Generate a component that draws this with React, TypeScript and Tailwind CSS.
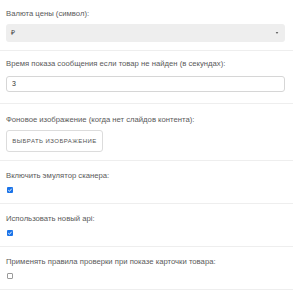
import React from 'react';

const Check = ({ on }: { on: boolean }) =>
  on ? (
    <span className="flex h-[6px] w-[6px] items-center justify-center rounded-[1px] bg-[#1a73e8]">
      <svg viewBox="0 0 6 6" className="h-[6px] w-[6px]">
        <path d="M1.3 3.2 L2.5 4.3 L4.7 1.7" fill="none" stroke="#fff" strokeWidth="0.9" />
      </svg>
    </span>
  ) : (
    <span className="block h-[6px] w-[6px] rounded-[1px] border border-[#9a9a9a] bg-white" />
  );

const Row = ({
  label,
  pad = 'pt-[9px] pb-[10px]',
  gap = 'mb-[6px]',
  children,
}: {
  label: string;
  pad?: string;
  gap?: string;
  children: React.ReactNode;
}) => (
  <div className={`border-b border-[#eeeeee] pl-[6px] pr-[8px] ${pad}`}>
    <div className={`leading-[11px] ${gap}`}>{label}</div>
    {children}
  </div>
);

export default function App() {
  return (
    <div className="h-[292px] w-[300px] bg-white text-[7.7px] text-[#5a5a5a] [font-family:'Liberation_Sans',Arial,sans-serif]">
      <div className="w-[293px]">
        <Row label="Валюта цены (символ):" pad="pt-[8px] pb-[8px]" gap="mb-[5px]">
          <div className="flex h-[18px] items-center justify-between rounded-[3px] bg-[#eeeeee] pl-[5px] pr-[6px] text-[7px] text-[#444]">
            <span>₽</span>
            <svg viewBox="0 0 4 3" className="h-[2px] w-[4px]">
              <path d="M0 0 L4 0 L2 3 Z" fill="#666" />
            </svg>
          </div>
        </Row>
        <Row
          label="Время показа сообщения если товар не найден (в секундах):"
          pad="pt-[7px] pb-[11px]"
          gap="mb-[7px]"
        >
          <div className="flex h-[16px] items-center rounded-[3px] border border-[#d6d6d6] pl-[5px] text-[7px] text-[#333]">
            3
          </div>
        </Row>
        <Row
          label="Фоновое изображение (когда нет слайдов контента):"
          pad="pt-[10px] pb-[8px]"
          gap="mb-[5px]"
        >
          <button className="flex h-[22px] w-[97px] items-center justify-center rounded-[3px] border border-[#dcdcdc] bg-white text-[6px] tracking-[0.45px] text-[#555] uppercase">
            Выбрать изображение
          </button>
        </Row>
        <Row label="Включить эмулятор сканера:">
          <div className="pl-[1px]">
            <Check on />
          </div>
        </Row>
        <Row label="Использовать новый api:">
          <div className="pl-[1px]">
            <Check on />
          </div>
        </Row>
        <Row label="Применять правила проверки при показе карточки товара:">
          <div className="pl-[1px]">
            <Check on={false} />
          </div>
        </Row>
      </div>
    </div>
  );
}
